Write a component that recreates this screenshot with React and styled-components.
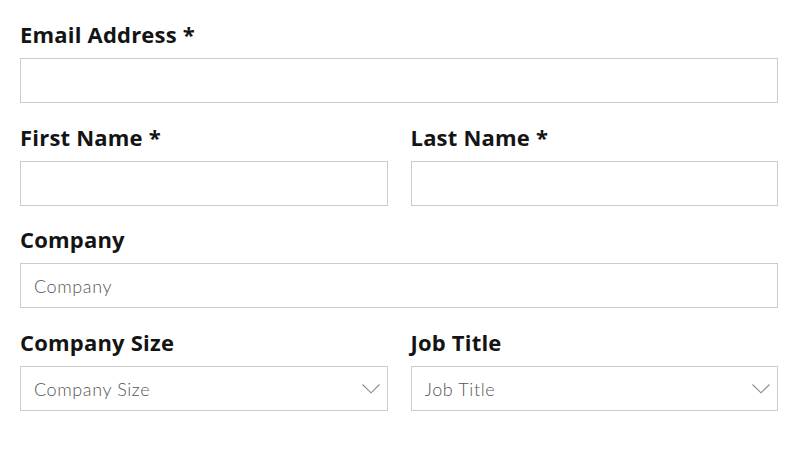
import React from 'react';
import styled, { createGlobalStyle } from 'styled-components';

const GlobalStyle = createGlobalStyle`
  html, body {
    margin: 0;
    padding: 0;
    background: #fff;
  }
  body {
    font-family: "Open Sans", Lato, sans-serif;
    color: #111;
  }
`;

const Form = styled.form`
  display: flex;
  flex-direction: column;
  gap: 19.7px;
  padding: 20px 22px 0 20px;
`;

const Row = styled.div`
  display: grid;
  grid-template-columns: ${({ cols }) => (cols === 2 ? '1fr 1fr' : '1fr')};
  column-gap: 23px;
`;

const Field = styled.label`
  display: flex;
  flex-direction: column;
`;

const Label = styled.span`
  font-family: "Open Sans", Lato, sans-serif;
  font-size: 22px;
  line-height: 28px;
  font-weight: 700;
  color: #141414;
  margin-bottom: 10px;
  letter-spacing: 0.2px;
`;

const Input = styled.input`
  box-sizing: border-box;
  height: 45px;
  width: 100%;
  border: 1px solid #cccccc;
  border-radius: 0;
  padding: 0 13px;
  font-family: Lato, "Open Sans", sans-serif;
  font-size: 18px;
  font-weight: 300;
  letter-spacing: 0.6px;
  color: #222;
  background: #fff;
  outline: none;

  &::placeholder {
    color: #555;
  }
`;

const SelectWrap = styled.div`
  position: relative;
`;

const Select = styled.select`
  box-sizing: border-box;
  appearance: none;
  height: 45px;
  width: 100%;
  border: 1px solid #cccccc;
  border-radius: 0;
  padding: 0 40px 0 13px;
  font-family: Lato, "Open Sans", sans-serif;
  font-size: 18px;
  font-weight: 300;
  letter-spacing: 0.6px;
  color: #555;
  background: #fff;
  outline: none;
`;

const Chevron = styled.svg`
  position: absolute;
  right: 8px;
  top: 18px;
  pointer-events: none;
`;

const ChevronIcon = () => (
  <Chevron width="18" height="10" viewBox="0 0 18 10" fill="none">
    <polyline points="0.5,0.5 9,8.8 17.5,0.5" stroke="#8a8a8a" strokeWidth="1.1" />
  </Chevron>
);

const SelectField = ({ label, placeholder }) => (
  <Field>
    <Label>{label}</Label>
    <SelectWrap>
      <Select defaultValue="">
        <option value="" disabled>
          {placeholder}
        </option>
      </Select>
      <ChevronIcon />
    </SelectWrap>
  </Field>
);

export default function App() {
  return (
    <>
      <GlobalStyle />
      <Form onSubmit={(e) => e.preventDefault()}>
        <Row>
          <Field>
            <Label>Email Address *</Label>
            <Input type="email" />
          </Field>
        </Row>
        <Row cols={2}>
          <Field>
            <Label>First Name *</Label>
            <Input type="text" />
          </Field>
          <Field>
            <Label>Last Name *</Label>
            <Input type="text" />
          </Field>
        </Row>
        <Row>
          <Field>
            <Label>Company</Label>
            <Input type="text" placeholder="Company" />
          </Field>
        </Row>
        <Row cols={2}>
          <SelectField label="Company Size" placeholder="Company Size" />
          <SelectField label="Job Title" placeholder="Job Title" />
        </Row>
      </Form>
    </>
  );
}
